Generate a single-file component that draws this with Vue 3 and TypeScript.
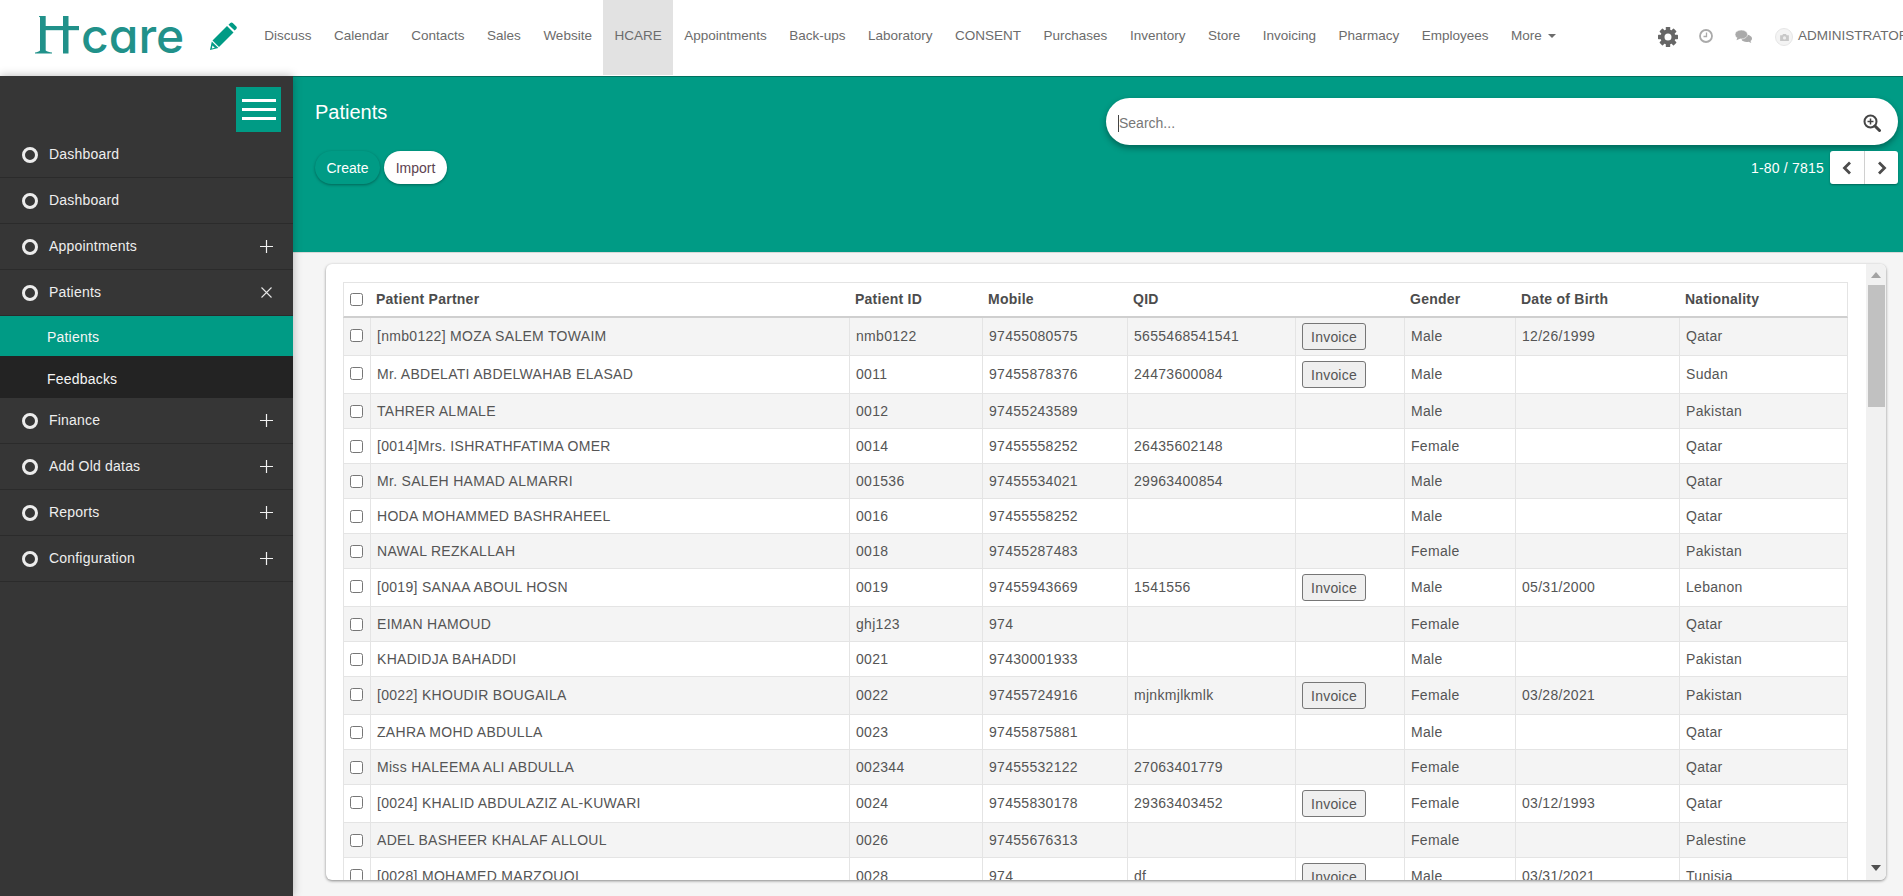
<script setup lang="ts">
interface Patient {
  name: string
  id: string
  mobile: string
  qid: string
  invoice: boolean
  gender: string
  dob: string
  nationality: string
}

const apps: string[] = [
  'Discuss', 'Calendar', 'Contacts', 'Sales', 'Website', 'HCARE', 'Appointments', 'Back-ups',
  'Laboratory', 'CONSENT', 'Purchases', 'Inventory', 'Store', 'Invoicing', 'Pharmacy', 'Employees',
]

const menuBefore: { label: string; icon: string }[] = [
  { label: 'Dashboard', icon: '' },
  { label: 'Dashboard', icon: '' },
  { label: 'Appointments', icon: 'plus' },
  { label: 'Patients', icon: 'close' },
]
const menuAfter: { label: string; icon: string }[] = [
  { label: 'Finance', icon: 'plus' },
  { label: 'Add Old datas', icon: 'plus' },
  { label: 'Reports', icon: 'plus' },
  { label: 'Configuration', icon: 'plus' },
]

const headers: string[] = ['Patient Partner', 'Patient ID', 'Mobile', 'QID', '', 'Gender', 'Date of Birth', 'Nationality']

const patients: Patient[] = [
  { name: '[nmb0122] MOZA SALEM TOWAIM', id: 'nmb0122', mobile: '97455080575', qid: '5655468541541', invoice: true, gender: 'Male', dob: '12/26/1999', nationality: 'Qatar' },
  { name: 'Mr. ABDELATI ABDELWAHAB ELASAD', id: '0011', mobile: '97455878376', qid: '24473600084', invoice: true, gender: 'Male', dob: '', nationality: 'Sudan' },
  { name: 'TAHRER ALMALE', id: '0012', mobile: '97455243589', qid: '', invoice: false, gender: 'Male', dob: '', nationality: 'Pakistan' },
  { name: '[0014]Mrs. ISHRATHFATIMA OMER', id: '0014', mobile: '97455558252', qid: '26435602148', invoice: false, gender: 'Female', dob: '', nationality: 'Qatar' },
  { name: 'Mr. SALEH HAMAD ALMARRI', id: '001536', mobile: '97455534021', qid: '29963400854', invoice: false, gender: 'Male', dob: '', nationality: 'Qatar' },
  { name: 'HODA MOHAMMED BASHRAHEEL', id: '0016', mobile: '97455558252', qid: '', invoice: false, gender: 'Male', dob: '', nationality: 'Qatar' },
  { name: 'NAWAL REZKALLAH', id: '0018', mobile: '97455287483', qid: '', invoice: false, gender: 'Female', dob: '', nationality: 'Pakistan' },
  { name: '[0019] SANAA ABOUL HOSN', id: '0019', mobile: '97455943669', qid: '1541556', invoice: true, gender: 'Male', dob: '05/31/2000', nationality: 'Lebanon' },
  { name: 'EIMAN HAMOUD', id: 'ghj123', mobile: '974', qid: '', invoice: false, gender: 'Female', dob: '', nationality: 'Qatar' },
  { name: 'KHADIDJA BAHADDI', id: '0021', mobile: '97430001933', qid: '', invoice: false, gender: 'Male', dob: '', nationality: 'Pakistan' },
  { name: '[0022] KHOUDIR BOUGAILA', id: '0022', mobile: '97455724916', qid: 'mjnkmjlkmlk', invoice: true, gender: 'Female', dob: '03/28/2021', nationality: 'Pakistan' },
  { name: 'ZAHRA MOHD ABDULLA', id: '0023', mobile: '97455875881', qid: '', invoice: false, gender: 'Male', dob: '', nationality: 'Qatar' },
  { name: 'Miss HALEEMA ALI ABDULLA', id: '002344', mobile: '97455532122', qid: '27063401779', invoice: false, gender: 'Female', dob: '', nationality: 'Qatar' },
  { name: '[0024] KHALID ABDULAZIZ AL-KUWARI', id: '0024', mobile: '97455830178', qid: '29363403452', invoice: true, gender: 'Female', dob: '03/12/1993', nationality: 'Qatar' },
  { name: 'ADEL BASHEER KHALAF ALLOUL', id: '0026', mobile: '97455676313', qid: '', invoice: false, gender: 'Female', dob: '', nationality: 'Palestine' },
  { name: '[0028] MOHAMED MARZOUQI', id: '0028', mobile: '974', qid: 'df', invoice: true, gender: 'Male', dob: '03/31/2021', nationality: 'Tunisia' },
]

const gearTeeth: number[] = [0, 45, 90, 135, 180, 225, 270, 315]
</script>

<template>
  <div class="page">
    <header class="topbar">
      <div class="brand">
        <svg class="brand-mark" viewBox="0 0 46 38" aria-hidden="true">
          <path d="M4 0H10.700V34.500C12 35.600 14.500 36.300 17 36.600V37.500H0V36.600C2 36.300 4 35.600 5 34.500V1.200L4 .8Z" fill="#21918a" />
          <rect x="28" y="0" width="5.500" height="37.500" fill="#21918a" />
          <rect x="10" y="10" width="34" height="4.200" fill="#21918a" />
        </svg>
        <span class="brand-word">care</span>
        <svg class="pencil" viewBox="0 0 28 29" aria-hidden="true">
          <path d="M3.500 18.500 18 4l6.500 6.500L10 25z" fill="#009b85" />
          <path d="M19.500 2.800 21.300 1c.8-.8 1.800-.8 2.500 0l3.500 3.500c.7.700.7 1.700 0 2.400l-1.700 1.700z" fill="#009b85" />
          <path d="M2.800 19.500 1 28l8.400-1.900z" fill="#009b85" />
          <path d="M3.500 23.500 2.800 26.500l3-.7z" fill="#fff" />
        </svg>
      </div>
      <nav class="apps">
        <a v-for="app in apps" :key="app" class="app" :class="{ 'app-active': app === 'HCARE' }">{{ app }}</a>
        <a class="app">More<span class="caret"></span></a>
      </nav>
      <div class="systray">
        <svg class="gear" viewBox="0 0 20 20" aria-hidden="true">
          <rect v-for="a in gearTeeth" :key="a" x="7.800" y="0" width="4.400" height="4" rx=".6" fill="#666" :transform="`rotate(${a} 10 10)`" />
          <circle cx="10" cy="10" r="5.500" fill="none" stroke="#666" stroke-width="4" />
        </svg>
        <svg class="clock" viewBox="0 0 14 14" aria-hidden="true">
          <circle cx="7" cy="7" r="6" fill="none" stroke="#aaa" stroke-width="1.800" />
          <path d="M7.500 3.500V7.500H4.500" fill="none" stroke="#aaa" stroke-width="1.300" />
        </svg>
        <svg class="chat" viewBox="0 0 17 13" aria-hidden="true">
          <path d="M10 4.500c3.500 0 7 1.500 7 4 0 1.200-.6 2-1.500 2.600l.8 1.900-2.800-1.300c-3 .6-6-.3-7-2z" fill="#aaa" />
          <ellipse cx="6.300" cy="4.500" rx="6.300" ry="4.500" fill="#aaa" stroke="#fff" stroke-width=".6" />
          <path d="M2.500 7 1.500 10.200 5.500 8.500z" fill="#aaa" />
        </svg>
        <span class="avatar">
          <svg class="avatar-cam" viewBox="0 0 10 8" aria-hidden="true">
            <path d="M0 1.500h2.500L3.300 0h3.400l.8 1.500H10V8H0z" fill="#c8c8c8" />
            <circle cx="5" cy="4.500" r="1.800" fill="#eee" />
          </svg>
        </span>
        <span class="user">ADMINISTRATOR</span>
      </div>
    </header>

    <div class="body">
      <aside class="sidebar">
        <div class="toggle-row">
          <button class="toggle" type="button" aria-label="Toggle menu">
            <span class="bar"></span>
            <span class="bar"></span>
            <span class="bar"></span>
          </button>
        </div>
        <a v-for="(item, i) in menuBefore" :key="i" class="menu-item">
          <span class="ring"></span>
          <span class="menu-label">{{ item.label }}</span>
          <svg v-if="item.icon === 'plus'" class="menu-icon" viewBox="0 0 13 13" aria-hidden="true">
            <path d="M6.500 0v13M0 6.500h13" stroke="#f2f2f2" stroke-width="1.200" />
          </svg>
          <svg v-if="item.icon === 'close'" class="menu-icon" viewBox="0 0 13 13" aria-hidden="true">
            <path d="M1.500 1.500l10 10M11.500 1.500l-10 10" stroke="#e6e6e6" stroke-width="1.100" />
          </svg>
        </a>
        <a class="sub-item sub-active">Patients</a>
        <a class="sub-item sub-dark">Feedbacks</a>
        <a v-for="item in menuAfter" :key="item.label" class="menu-item">
          <span class="ring"></span>
          <span class="menu-label">{{ item.label }}</span>
          <svg class="menu-icon" viewBox="0 0 13 13" aria-hidden="true">
            <path d="M6.500 0v13M0 6.500h13" stroke="#f2f2f2" stroke-width="1.200" />
          </svg>
        </a>
      </aside>

      <main class="main">
        <section class="hero">
          <div class="hero-left">
            <h1 class="title">Patients</h1>
            <div class="actions">
              <button class="pill pill-primary" type="button">Create</button>
              <button class="pill pill-light" type="button">Import</button>
            </div>
          </div>
          <div class="hero-right">
            <div class="search">
              <span class="search-text">Search...</span>
              <svg class="search-icon" viewBox="0 0 18 18" aria-hidden="true">
                <circle cx="7.500" cy="7.500" r="6" fill="none" stroke="#444" stroke-width="2" />
                <path d="M7.500 4.500v6M4.500 7.500h6" stroke="#444" stroke-width="1.500" />
                <path d="M12 12l4.500 4.500" stroke="#444" stroke-width="3" stroke-linecap="round" />
              </svg>
            </div>
            <div class="pager">
              <span class="pager-text">1-80 / 7815</span>
              <div class="pager-btns">
                <button class="pager-btn" type="button" aria-label="Previous">
                  <svg viewBox="0 0 10 14" class="chev" aria-hidden="true"><path d="M8 1.500 2.500 7 8 12.500" fill="none" stroke="#4c4c4c" stroke-width="2.800" /></svg>
                </button>
                <button class="pager-btn" type="button" aria-label="Next">
                  <svg viewBox="0 0 10 14" class="chev" aria-hidden="true"><path d="M2 1.500 7.500 7 2 12.500" fill="none" stroke="#4c4c4c" stroke-width="2.800" /></svg>
                </button>
              </div>
            </div>
          </div>
        </section>

        <section class="card">
          <div class="scroll">
            <table class="grid">
              <colgroup>
                <col class="c0" /><col class="c1" /><col class="c2" /><col class="c3" /><col class="c4" />
                <col class="c5" /><col class="c6" /><col class="c7" /><col class="c8" />
              </colgroup>
              <thead>
                <tr>
                  <th class="check-cell"><input type="checkbox" class="check" /></th>
                  <th v-for="(h, i) in headers" :key="i">{{ h }}</th>
                </tr>
              </thead>
              <tbody>
                <tr v-for="p in patients" :key="p.id + p.name" :class="{ 'with-invoice': p.invoice }">
                  <td class="check-cell"><input type="checkbox" class="check" /></td>
                  <td>{{ p.name }}</td>
                  <td>{{ p.id }}</td>
                  <td>{{ p.mobile }}</td>
                  <td>{{ p.qid }}</td>
                  <td :class="{ 'btn-cell': p.invoice }">
                    <button v-if="p.invoice" class="invoice" type="button">Invoice</button>
                  </td>
                  <td>{{ p.gender }}</td>
                  <td>{{ p.dob }}</td>
                  <td>{{ p.nationality }}</td>
                </tr>
              </tbody>
            </table>
          </div>
          <div class="scrollbar">
            <svg class="arrow arrow-up" viewBox="0 0 10 6" aria-hidden="true"><path d="M0 6 5 0l5 6z" fill="#a3a3a3" /></svg>
            <div class="thumb"></div>
            <svg class="arrow arrow-down" viewBox="0 0 10 6" aria-hidden="true"><path d="M0 0l5 6 5-6z" fill="#505050" /></svg>
          </div>
        </section>
      </main>
    </div>
  </div>
</template>

<style>
html,
body {
  margin: 0;
  overflow: hidden;
}
</style>

<style scoped>
.page {
  height: 896px;
  width: 1903px;
  display: flex;
  flex-direction: column;
  overflow: hidden;
  font-family: "Liberation Sans", Arial, sans-serif;
  font-size: 14px;
  line-height: 20px;
  color: #4c4c4c;
  background: #f5f5f5;
}

/* top bar */
.topbar {
  height: 76px;
  flex: none;
  display: flex;
  background: #fff;
}
.brand {
  width: 253px;
  flex: none;
  display: flex;
  align-items: flex-start;
  padding: 16px 0 0 35px;
  box-sizing: border-box;
}
.brand-mark {
  width: 46px;
  height: 38px;
  flex: none;
}
.brand-word {
  font-family: Inter, "Liberation Sans", sans-serif;
  font-feature-settings: "cv11";
  font-weight: 500;
  font-size: 48px;
  line-height: 38px;
  color: #21918a;
  margin-top: 1px;
  width: 129px;
  flex: none;
}
.pencil {
  width: 28px;
  height: 29px;
  flex: none;
  margin: 6px 0 0 -1px;
}
.apps {
  flex: 1;
  display: flex;
  min-width: 0;
  font-size: 13.5px;
}
.app {
  height: 75px;
  padding: 0 11.25px 4px;
  display: flex;
  align-items: center;
  color: #6c6c6c;
  white-space: nowrap;
  box-sizing: border-box;
}
.app-active {
  background: #e2e2e2;
}
.caret {
  width: 0;
  height: 0;
  margin-left: 6px;
  border-left: 4px solid transparent;
  border-right: 4px solid transparent;
  border-top: 4px solid #6c6c6c;
}
.systray {
  width: 245px;
  flex: none;
  display: flex;
  align-items: flex-start;
  color: #6c6c6c;
  white-space: nowrap;
  font-size: 13.5px;
}
.systray > * {
  flex: none;
}
.gear {
  width: 20px;
  height: 20px;
  margin-top: 27px;
}
.clock {
  width: 14px;
  height: 14px;
  margin: 29px 0 0 21px;
}
.chat {
  width: 17px;
  height: 13px;
  margin: 30px 0 0 22px;
}
.avatar {
  width: 18px;
  height: 18px;
  margin: 28px 0 0 23px;
  border-radius: 50%;
  border: 1px solid #e6e6e6;
  box-sizing: border-box;
  background: #f4f4f4;
  display: flex;
  align-items: center;
  justify-content: center;
}
.avatar-cam {
  width: 9px;
  height: 7px;
}
.user {
  margin: 26px 0 0 5px;
}

/* body */
.body {
  flex: 1;
  min-height: 0;
  display: flex;
}

/* sidebar */
.sidebar {
  width: 293px;
  flex: none;
  background: #363636;
  color: #eee;
  box-shadow: 0 0 9px rgba(0, 0, 0, 0.28);
  position: relative;
  z-index: 1;
}
.toggle-row {
  height: 56px;
  display: flex;
  justify-content: flex-end;
  padding: 11px 12px 0 0;
  box-sizing: border-box;
}
.toggle {
  width: 45px;
  height: 45px;
  padding: 0;
  border: 0;
  background: #009b85;
  display: flex;
  flex-direction: column;
  align-items: center;
  justify-content: center;
  gap: 6px;
}
.bar {
  width: 34px;
  height: 3px;
  background: #fff;
}
.menu-item {
  height: 46px;
  box-sizing: border-box;
  border-bottom: 1px solid #2b2b2b;
  display: flex;
  align-items: center;
  padding: 0 20px 0 22px;
}
.ring {
  width: 16px;
  height: 16px;
  box-sizing: border-box;
  border: 3px solid #ececec;
  border-radius: 50%;
  flex: none;
}
.menu-label {
  margin-left: 11px;
  flex: 1;
  letter-spacing: 0.2px;
  margin-bottom: 2px;
}
.menu-icon {
  width: 13px;
  height: 13px;
  flex: none;
}
.sub-item {
  display: flex;
  align-items: center;
  padding-left: 47px;
  color: #f5f5f5;
  letter-spacing: 0.2px;
  box-sizing: border-box;
}
.sub-active {
  height: 40px;
  padding-top: 1px;
  background: #009b85;
}
.sub-dark {
  height: 42px;
  padding-top: 3px;
  background: #232323;
}

/* main */
.main {
  flex: 1;
  min-width: 0;
  display: flex;
  flex-direction: column;
}
.hero {
  height: 177px;
  flex: none;
  box-sizing: border-box;
  background: #009b85;
  border-top: 1px solid #00705f;
  border-bottom: 1px solid #d8d8d8;
  display: flex;
  justify-content: space-between;
  padding: 21px 5px 0 22px;
}
.title {
  margin: 2px 0 0;
  font-size: 20px;
  line-height: 24px;
  font-weight: 400;
  color: #fff;
}
.actions {
  display: flex;
  gap: 4px;
  margin-top: 27px;
}
.pill {
  height: 33px;
  border: 0;
  border-radius: 17px;
  font: inherit;
  padding: 0;
  box-shadow: 0 1px 3px rgba(0, 0, 0, 0.35);
}
.pill-primary {
  width: 65px;
  background: #009b85;
  color: #fff;
}
.pill-light {
  width: 63px;
  background: #fff;
  color: #5d4350;
}
.hero-right {
  width: 792px;
}
.search {
  height: 47px;
  border-radius: 24px;
  background: #fff;
  box-shadow: 0 3px 6px rgba(0, 0, 0, 0.35);
  display: flex;
  align-items: center;
  justify-content: space-between;
  padding: 0 17px 0 12px;
}
.search-text {
  color: #777;
  border-left: 1px solid #444;
  line-height: 17px;
  margin-top: 4px;
}
.search-icon {
  width: 18px;
  height: 18px;
  margin-top: 3px;
}
.pager {
  margin-top: 6px;
  display: flex;
  justify-content: flex-end;
  align-items: center;
  gap: 6px;
  color: #fff;
}
.pager-text {
  letter-spacing: 0.2px;
}
.pager-btns {
  display: flex;
  border-radius: 3px;
  overflow: hidden;
  box-shadow: 0 1px 2px rgba(0, 0, 0, 0.35);
}
.pager-btn {
  width: 34px;
  height: 33px;
  padding: 0;
  border: 0;
  background: #fff;
  display: flex;
  align-items: center;
  justify-content: center;
}
.pager-btn + .pager-btn {
  border-left: 1px solid #d0d0d0;
}
.chev {
  width: 10px;
  height: 14px;
}

/* card */
.card {
  flex: 1;
  min-height: 0;
  margin: 11px 17px 16px 33px;
  display: flex;
  background: #fff;
  border-radius: 6px;
  overflow: hidden;
  box-shadow: 0 1px 3px rgba(0, 0, 0, 0.45);
}
.scroll {
  flex: 1;
  min-width: 0;
  overflow: hidden;
  padding: 18px 0 0 17px;
}
.grid {
  width: 1505px;
  table-layout: fixed;
  border-collapse: separate;
  border-spacing: 0;
  color: #555;
}
.c0 { width: 28px; }
.c1 { width: 479px; }
.c2 { width: 133px; }
.c3 { width: 145px; }
.c4 { width: 168px; }
.c5 { width: 109px; }
.c6 { width: 111px; }
.c7 { width: 164px; }
.c8 { width: 168px; }
th {
  text-align: left;
  font-weight: 700;
  color: #4c4c4c;
  padding: 6px 6px 7px 5px;
  border-top: 1px solid #e4e4e4;
  border-bottom: 2px solid #cfcfcf;
  white-space: nowrap;
  letter-spacing: 0.25px;
}
th:first-child {
  border-left: 1px solid #e4e4e4;
}
th:last-child {
  border-right: 1px solid #e4e4e4;
}
td {
  padding: 7px 6px;
  border-right: 1px solid #e4e4e4;
  border-bottom: 1px solid #e4e4e4;
  white-space: nowrap;
  overflow: hidden;
  vertical-align: middle;
  letter-spacing: 0.3px;
}
.with-invoice td {
  padding: 6px 6px 8px;
}
td:first-child {
  border-left: 1px solid #e4e4e4;
}
tbody tr:nth-child(odd) td {
  background: #f4f4f4;
}
td.check-cell,
th.check-cell {
  padding: 0 0 0 6px;
}
.with-invoice td.check-cell {
  padding: 0 0 2px 6px;
}
.check {
  display: block;
  width: 13px;
  height: 13px;
  margin: 0;
}
.with-invoice td.btn-cell {
  padding: 5px 6px;
}
.invoice {
  display: block;
  width: 64px;
  height: 27px;
  padding: 0;
  font: inherit;
  letter-spacing: 0.2px;
  color: #555;
  background: #efefef;
  border: 1px solid #767676;
  border-radius: 3px;
}

/* scrollbar */
.scrollbar {
  width: 20px;
  flex: none;
  background: #f1f1f1;
  display: flex;
  flex-direction: column;
  align-items: center;
}
.arrow {
  width: 10px;
  height: 6px;
  flex: none;
}
.arrow-up {
  margin-top: 8px;
}
.thumb {
  width: 17px;
  height: 122px;
  background: #c1c1c1;
  margin-top: 7px;
}
.arrow-down {
  margin: auto 0 9px;
}
</style>
